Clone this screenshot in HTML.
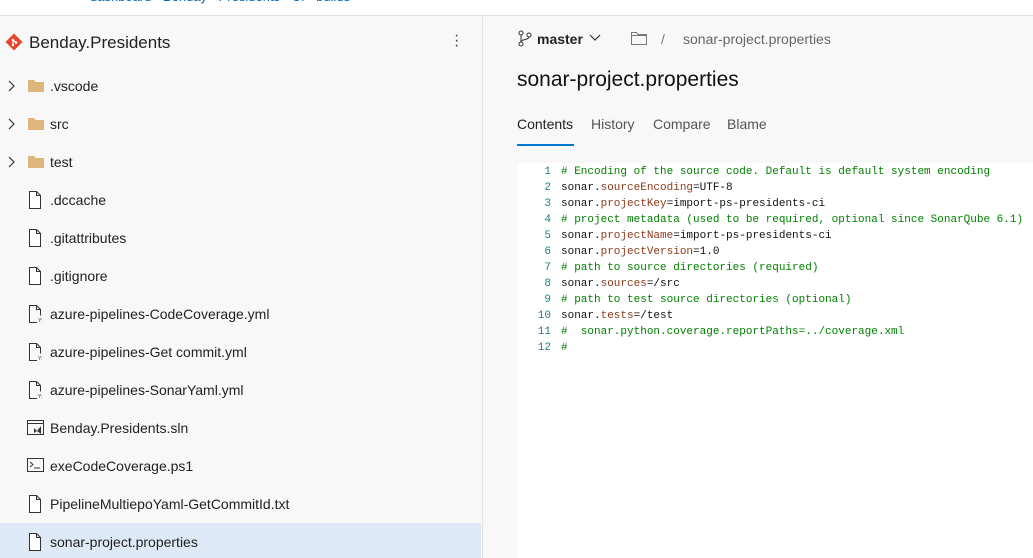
<!DOCTYPE html>
<html><head><style>
*{margin:0;padding:0;box-sizing:border-box}
body{width:1033px;height:558px;overflow:hidden;background:#f8f8f8;font-family:"Liberation Sans",sans-serif;position:relative;color:#222}
.top{position:absolute;left:0;top:0;width:1033px;height:16px;background:#fff;border-bottom:1px solid #e0e0e0;overflow:hidden}
.top span{position:absolute;top:-11px;left:90px;font-size:13px;color:#0066b8}
.left{position:absolute;left:0;top:17px;width:483px;height:541px;border-right:1px solid #e4e4e4;background:#f8f8f8}
.title{position:absolute;left:29px;top:33px;font-size:17px;color:#222}
.row{position:absolute;left:0;width:481px;height:36px;font-size:14px;color:#222}
.row .t{position:absolute;left:50px;top:10px}
.row svg{position:absolute}
.sel{background:#dde9f6}
.mono{font-family:"Liberation Mono",monospace}
.code{position:absolute;left:517px;top:163px;width:516px;height:395px;background:#fff}
.ln{position:absolute;font-size:11px;line-height:16px}
.num{position:absolute;left:0;width:34px;text-align:right;color:#237893}
.tx{position:absolute;left:44px;white-space:pre;color:#111}
.c{color:#008000}.k{color:#8a3a1c}
</style></head><body>
<div class="top"><span>dashboard · Benday · Presidents · CI · builds</span></div>
<div class="left"></div>
<svg style="position:absolute;left:5px;top:33px" width="18" height="18" viewBox="0 0 18 18"><rect x="3" y="3" width="12" height="12" transform="rotate(45 9 9)" fill="#e8452c"/><circle cx="8" cy="7" r="1.3" fill="#fff"/><circle cx="8" cy="12" r="1.3" fill="#fff"/><circle cx="11" cy="9.5" r="1.3" fill="#fff"/><path d="M8 7v5M8 7l3 2.5" stroke="#fff" stroke-width="1.2"/></svg>
<div class="title">Benday.Presidents</div>
<div style="position:absolute;left:454px;top:33px;width:3px;font-size:16px;line-height:5px;color:#444">·<br>·<br>·</div>

<div class="row" style="top:68px"><svg style="left:7px;top:11px" width="10" height="14"><path d="M2 2l5 5-5 5" fill="none" stroke="#333" stroke-width="1.2"/></svg><svg style="left:28px;top:11px" width="16" height="14"><path d="M0 1h6l2 2h8v10H0z" fill="#dcb67a"/></svg><span class="t">.vscode</span></div>
<div class="row" style="top:106px"><svg style="left:7px;top:11px" width="10" height="14"><path d="M2 2l5 5-5 5" fill="none" stroke="#333" stroke-width="1.2"/></svg><svg style="left:28px;top:11px" width="16" height="14"><path d="M0 1h6l2 2h8v10H0z" fill="#dcb67a"/></svg><span class="t">src</span></div>
<div class="row" style="top:144px"><svg style="left:7px;top:11px" width="10" height="14"><path d="M2 2l5 5-5 5" fill="none" stroke="#333" stroke-width="1.2"/></svg><svg style="left:28px;top:11px" width="16" height="14"><path d="M0 1h6l2 2h8v10H0z" fill="#dcb67a"/></svg><span class="t">test</span></div>

<div class="row" style="top:182px"><svg style="left:28px;top:9px" width="14" height="18"><path d="M1.5 .5h7l4 4v13h-11z M8.5 .5v4h4" fill="#fff" stroke="#333"/></svg><span class="t">.dccache</span></div>
<div class="row" style="top:220px"><svg style="left:28px;top:9px" width="14" height="18"><path d="M1.5 .5h7l4 4v13h-11z M8.5 .5v4h4" fill="#fff" stroke="#333"/></svg><span class="t">.gitattributes</span></div>
<div class="row" style="top:258px"><svg style="left:28px;top:9px" width="14" height="18"><path d="M1.5 .5h7l4 4v13h-11z M8.5 .5v4h4" fill="#fff" stroke="#333"/></svg><span class="t">.gitignore</span></div>
<div class="row" style="top:296px"><svg style="left:28px;top:9px" width="16" height="18"><path d="M9 17.5H1.5v-17h7l4 4v6 M8.5 .5v4h4" fill="none" stroke="#333"/><text x="10" y="17" font-size="5" fill="#333">Y:</text></svg><span class="t">azure-pipelines-CodeCoverage.yml</span></div>
<div class="row" style="top:334px"><svg style="left:28px;top:9px" width="16" height="18"><path d="M9 17.5H1.5v-17h7l4 4v6 M8.5 .5v4h4" fill="none" stroke="#333"/><text x="10" y="17" font-size="5" fill="#333">Y:</text></svg><span class="t">azure-pipelines-Get commit.yml</span></div>
<div class="row" style="top:372px"><svg style="left:28px;top:9px" width="16" height="18"><path d="M9 17.5H1.5v-17h7l4 4v6 M8.5 .5v4h4" fill="none" stroke="#333"/><text x="10" y="17" font-size="5" fill="#333">Y:</text></svg><span class="t">azure-pipelines-SonarYaml.yml</span></div>
<div class="row" style="top:410px"><svg style="left:27px;top:10px" width="18" height="16"><path d="M.5 .5h16v14H.5z M.5 3.5h16" fill="none" stroke="#333"/><path d="M7 8l3 3 4-5v8l-4-3-3 2z" fill="#333"/></svg><span class="t">Benday.Presidents.sln</span></div>
<div class="row" style="top:448px"><svg style="left:27px;top:10px" width="18" height="16"><path d="M.5 .5h16v13H.5z" fill="none" stroke="#333"/><path d="M3 4l3 2.5-3 2.5M7 10h6" fill="none" stroke="#333"/></svg><span class="t">exeCodeCoverage.ps1</span></div>
<div class="row" style="top:486px"><svg style="left:28px;top:9px" width="14" height="18"><path d="M1.5 .5h7l4 4v13h-11z M8.5 .5v4h4" fill="#fff" stroke="#333"/></svg><span class="t">PipelineMultiepoYaml-GetCommitId.txt</span></div>
<div class="row sel" style="top:523px;height:35px"><svg style="left:28px;top:10px" width="14" height="18"><path d="M1.5 .5h7l4 4v13h-11z M8.5 .5v4h4" fill="#fff" stroke="#333"/></svg><span class="t" style="top:11px">sonar-project.properties</span></div>

<svg style="position:absolute;left:518px;top:30px" width="14" height="17"><circle cx="3" cy="3" r="2" fill="none" stroke="#333"/><circle cx="3" cy="14" r="2" fill="none" stroke="#333"/><circle cx="11" cy="5" r="2" fill="none" stroke="#333"/><path d="M3 5v7M11 7c0 3-8 2-8 5" fill="none" stroke="#333"/></svg>
<div style="position:absolute;left:537px;top:31px;font-size:14px;font-weight:bold;color:#222">master</div>
<svg style="position:absolute;left:589px;top:34px" width="12" height="8"><path d="M1 1l5 5 5-5" fill="none" stroke="#333" stroke-width="1.2"/></svg>
<svg style="position:absolute;left:631px;top:32px" width="16" height="13"><path d="M.5 .5h5l1.5 2h8.5v10H.5z M.5 3.5h15" fill="none" stroke="#777"/></svg>
<div style="position:absolute;left:661px;top:31px;font-size:14px;color:#777">/</div>
<div style="position:absolute;left:683px;top:31px;font-size:14px;color:#666">sonar-project.properties</div>
<div style="position:absolute;left:517px;top:68px;font-size:21px;color:#111">sonar-project.properties</div>
<div style="position:absolute;left:517px;top:116px;font-size:14px;color:#222">Contents</div>
<div style="position:absolute;left:517px;top:144px;width:57px;height:2px;background:#0078d4"></div>
<div style="position:absolute;left:591px;top:116px;font-size:14px;color:#555">History</div>
<div style="position:absolute;left:653px;top:116px;font-size:14px;color:#555">Compare</div>
<div style="position:absolute;left:727px;top:116px;font-size:14px;color:#555">Blame</div>

<div class="code mono">
<div class="ln" style="top:1px"><span class="num">1</span><span class="tx c"># Encoding of the source code. Default is default system encoding</span></div>
<div class="ln" style="top:17px"><span class="num">2</span><span class="tx">sonar.<span class="k">sourceEncoding</span>=UTF-8</span></div>
<div class="ln" style="top:33px"><span class="num">3</span><span class="tx">sonar.<span class="k">projectKey</span>=import-ps-presidents-ci</span></div>
<div class="ln" style="top:49px"><span class="num">4</span><span class="tx c"># project metadata (used to be required, optional since SonarQube 6.1)</span></div>
<div class="ln" style="top:65px"><span class="num">5</span><span class="tx">sonar.<span class="k">projectName</span>=import-ps-presidents-ci</span></div>
<div class="ln" style="top:81px"><span class="num">6</span><span class="tx">sonar.<span class="k">projectVersion</span>=1.0</span></div>
<div class="ln" style="top:97px"><span class="num">7</span><span class="tx c"># path to source directories (required)</span></div>
<div class="ln" style="top:113px"><span class="num">8</span><span class="tx">sonar.<span class="k">sources</span>=/src</span></div>
<div class="ln" style="top:129px"><span class="num">9</span><span class="tx c"># path to test source directories (optional)</span></div>
<div class="ln" style="top:145px"><span class="num">10</span><span class="tx">sonar.<span class="k">tests</span>=/test</span></div>
<div class="ln" style="top:161px"><span class="num">11</span><span class="tx c">#  sonar.python.coverage.reportPaths=../coverage.xml</span></div>
<div class="ln" style="top:177px"><span class="num">12</span><span class="tx c">#</span></div>
</div>
</body></html>
